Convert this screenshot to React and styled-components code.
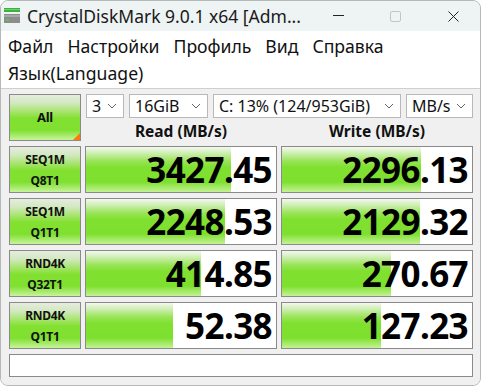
import React from "react";
import styled, { createGlobalStyle } from "styled-components";

const Global = createGlobalStyle`
  html, body { margin: 0; padding: 0; background: #ffffff; }
  body { font-family: "Noto Sans", "Open Sans", sans-serif; }
  * { box-sizing: border-box; }
`;

const Window = styled.div`
  width: 481px;
  height: 386px;
  border: 1px solid #b4b8b8;
  border-radius: 8px;
  overflow: hidden;
  display: flex;
  flex-direction: column;
  background: #f0f0f0;
`;

const TitleBar = styled.div`
  height: 30px;
  background: #eef3f3;
  display: flex;
  align-items: center;
  padding-left: 3px;
`;

const TitleText = styled.div`
  font-size: 17.5px;
  color: #1a1a1a;
  margin-left: 7px;
  flex: 1;
  white-space: nowrap;
  padding-bottom: 1px;
`;

const Controls = styled.div`
  display: flex;
  align-items: center;
`;

const Ctl = styled.div`
  width: ${(p) => p.w}px;
  height: 30px;
  display: flex;
  align-items: center;
  justify-content: center;
`;

const Menu = styled.div`
  background: #ffffff;
  border-bottom: 1px solid #cfcfcf;
  padding: 1px 0 2px 0;
`;

const MenuRow = styled.div`
  display: flex;
  height: 27px;
  align-items: center;
  padding-left: 7px;
  gap: 14px;
  font-size: 17.6px;
  color: #111;
`;

const Client = styled.div`
  flex: 1;
  background: #f0f0f0;
  padding: 5px 0 0 8px;
  display: grid;
  grid-template-columns: 72px 192px 192px;
  grid-template-rows: 47px 47px 47px 47px 47px 23px;
  column-gap: 4px;
  row-gap: 5px;
`;

const greenGrad = `linear-gradient(to bottom,
  #f4f8f0 0%, #cdeeb0 14%, #97e454 32%, #80e030 45%, #7ee02e 78%, #9fe860 88%, #c4f296 100%)`;

const TestButton = styled.div`
  position: relative;
  border: 1px solid #8a8a8a;
  background: linear-gradient(to bottom,
    #e6ece0 0%, #d2e8c0 18%, #a4e468 38%, #82e030 52%, #80e030 78%, #a6ea6a 90%, #c8f49c 100%);
  display: flex;
  flex-direction: column;
  align-items: center;
  justify-content: center;
  font-weight: 700;
  font-size: ${(p) => (p.big ? 13 : 12)}px;
  line-height: 21px;
  color: #111;
  letter-spacing: -0.3px;
`;

const Corner = styled.div`
  position: absolute;
  right: 0;
  bottom: 0;
  width: 0;
  height: 0;
  border-left: 7px solid transparent;
  border-bottom: 7px solid #ff7a00;
`;

const TopPanel = styled.div`
  grid-column: 2 / 4;
  display: flex;
  flex-direction: column;
`;

const Selects = styled.div`
  display: flex;
  gap: 5px;
  padding-left: 1px;
  height: 24px;
`;

const Select = styled.div`
  width: ${(p) => p.w}px;
  flex: ${(p) => (p.grow ? 1 : "none")};
  height: 24px;
  background: #ffffff;
  border: 1px solid #b8b8b8;
  display: flex;
  align-items: center;
  justify-content: space-between;
  padding: 0 6px 0 5px;
  font-size: 16px;
  color: #111;
  white-space: nowrap;
`;

const Headers = styled.div`
  flex: 1;
  display: grid;
  grid-template-columns: 192px 192px;
  column-gap: 4px;
  align-items: center;
`;

const Header = styled.div`
  text-align: center;
  font-weight: 700;
  font-size: 15.5px;
  color: #111;
  padding-top: 2px;
`;

const Cell = styled.div`
  position: relative;
  border: 1px solid #8a8a8a;
  background: #ffffff;
  overflow: hidden;
`;

const Fill = styled.div`
  position: absolute;
  left: 0;
  top: 0;
  bottom: 0;
  background: ${greenGrad};
`;

const Value = styled.div`
  position: relative;
  height: 100%;
  display: flex;
  align-items: center;
  justify-content: flex-end;
  padding-right: 4px;
  font-weight: 700;
  font-size: 35px;
  color: #000;
  letter-spacing: -0.6px;
  line-height: 1;
`;

const Status = styled.div`
  grid-column: 1 / 4;
  border: 1px solid #8a8a8a;
  background: #ffffff;
`;

const Chevron = () => (
  <svg width="10" height="6" viewBox="0 0 10 6">
    <path d="M1 1 L5 5 L9 1" fill="none" stroke="#666" strokeWidth="1" />
  </svg>
);

const AppIcon = () => (
  <svg width="16" height="16" viewBox="0 0 16 16">
    <rect x="0" y="0" width="16" height="4" fill="#3cb043" />
    <rect x="0" y="1" width="16" height="1" fill="#6cd46c" />
    <rect x="0" y="6" width="16" height="9" fill="#8c8c8c" />
    <rect x="0" y="7" width="16" height="2" fill="#a8a8a8" />
    <rect x="2" y="11" width="3" height="2" fill="#4cd04c" />
  </svg>
);

const rows = [
  { a: "SEQ1M", b: "Q8T1", r: "3427.45", w: "2296.13", rf: 145, wf: 139 },
  { a: "SEQ1M", b: "Q1T1", r: "2248.53", w: "2129.32", rf: 139, wf: 138 },
  { a: "RND4K", b: "Q32T1", r: "414.85", w: "270.67", rf: 115, wf: 109 },
  { a: "RND4K", b: "Q1T1", r: "52.38", w: "127.23", rf: 87, wf: 99 },
];

export default function App() {
  return (
    <>
      <Global />
      <Window>
        <TitleBar>
          <AppIcon />
          <TitleText>CrystalDiskMark 9.0.1 x64 [Adm...</TitleText>
          <Controls>
            <Ctl w={51}>
              <svg width="12" height="2" viewBox="0 0 12 2">
                <rect x="0" y="0" width="11" height="1" fill="#222" />
              </svg>
            </Ctl>
            <Ctl w={62}>
              <svg width="11" height="11" viewBox="0 0 11 11">
                <rect x="0.5" y="0.5" width="10" height="10" rx="1.5" fill="none" stroke="#c4c4c4" />
              </svg>
            </Ctl>
            <Ctl w={54}>
              <svg width="11" height="11" viewBox="0 0 11 11">
                <path d="M0.5 0.5 L10.5 10.5 M10.5 0.5 L0.5 10.5" stroke="#222" strokeWidth="1" />
              </svg>
            </Ctl>
          </Controls>
        </TitleBar>
        <Menu>
          <MenuRow>
            <span>Файл</span>
            <span>Настройки</span>
            <span>Профиль</span>
            <span>Вид</span>
            <span>Справка</span>
          </MenuRow>
          <MenuRow>
            <span>Язык(Language)</span>
          </MenuRow>
        </Menu>
        <Client>
          <TestButton big>
            All
            <Corner />
          </TestButton>
          <TopPanel>
            <Selects>
              <Select w={38}>3<Chevron /></Select>
              <Select w={79}>16GiB<Chevron /></Select>
              <Select grow>C: 13% (124/953GiB)<Chevron /></Select>
              <Select w={67}>MB/s<Chevron /></Select>
            </Selects>
            <Headers>
              <Header>Read (MB/s)</Header>
              <Header>Write (MB/s)</Header>
            </Headers>
          </TopPanel>
          {rows.map((row) => (
            <React.Fragment key={row.a + row.b}>
              <TestButton>
                <span>{row.a}</span>
                <span>{row.b}</span>
              </TestButton>
              <Cell>
                <Fill style={{ width: row.rf }} />
                <Value>{row.r}</Value>
              </Cell>
              <Cell>
                <Fill style={{ width: row.wf }} />
                <Value>{row.w}</Value>
              </Cell>
            </React.Fragment>
          ))}
          <Status />
        </Client>
      </Window>
    </>
  );
}
